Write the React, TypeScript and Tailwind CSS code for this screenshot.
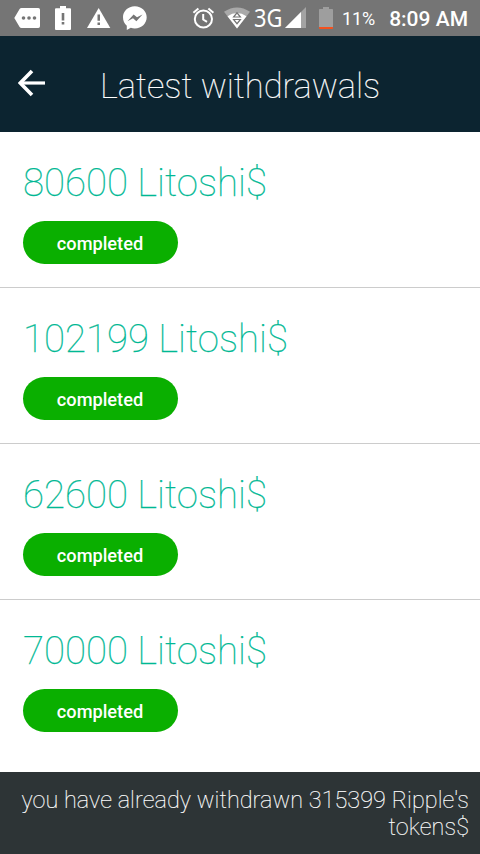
const withdrawals = [
  { amount: 80600, status: 'completed' },
  { amount: 102199, status: 'completed' },
  { amount: 62600, status: 'completed' },
  { amount: 70000, status: 'completed' },
];

function NotificationIcons() {
  return (
    <svg width="160" height="36" viewBox="0 0 160 36" fill="#fff">
      {/* More notifications */}
      <path d="M21.5 8H38.3A1.7 1.7 0 0 1 40 9.7V26.3A1.7 1.7 0 0 1 38.3 28H21.5Q20.3 28 19.6 27L14.3 18L19.6 9Q20.3 8 21.5 8Z" />
      <g fill="#757575">
        <circle cx="23.5" cy="18" r="1.8" />
        <circle cx="29" cy="18" r="1.8" />
        <circle cx="34.5" cy="18" r="1.8" />
      </g>
      {/* Battery alert */}
      <path d="M60 6H66V8.3H70Q71 8.3 71 9.3V29Q71 30 70 30H56Q55 30 55 29V9.3Q55 8.3 56 8.3H60Z" />
      <path fill="#757575" d="M61.7 13H64.3V20.5H61.7ZM61.7 22H64.3V24.6H61.7Z" />
      {/* Warning */}
      <path d="M98.7 8L110.3 28H87Z" />
      <path fill="#757575" d="M97.5 14.6H100V20.8H97.5ZM97.5 22.4H100V25H97.5Z" />
      {/* Messenger */}
      <path d="M134.8 6.2C141.7 6.2 146.7 11.2 146.7 17.3C146.7 23.5 141.7 28.4 134.8 28.4C133.4 28.4 132 28.2 130.8 27.8L126.8 30V25.8C124.3 23.8 123 20.8 123 17.3C123 11.2 127.9 6.2 134.8 6.2Z" />
      <path fill="#757575" d="M127.5 21.2L133.6 14.4L137 17.3L142.5 14.4L136.4 21.2L133 18.2Z" />
    </svg>
  );
}

function AlarmIcon() {
  return (
    <svg width="24" height="24" viewBox="0 0 24 24" fill="none" stroke="#fff" strokeWidth="2">
      <circle cx="12.4" cy="13" r="8.6" />
      <path d="M2.4 6.7L7.4 2.5M17.4 2.5L22.4 6.7M12.2 8V13.5L16 15.9" />
    </svg>
  );
}

function WifiIcon() {
  return (
    <svg width="26" height="22" viewBox="0 0 26 22">
      <path fill="#a9a9a9" d="M0 4.8Q13 -4 26 4.8L13 21.5Z" />
      <path fill="#fff" d="M3.5 9.3Q13 2.5 22.5 9.3L13 21.5Z" />
      <path fill="none" stroke="#757575" strokeWidth="1.2" d="M9.6 10L13 5.8L16.4 10ZM9.6 12.5H16.4L13 16.7Z" />
    </svg>
  );
}

function SignalIcon() {
  return (
    <svg width="21" height="22" viewBox="0 0 21 22">
      <path fill="#a3a3a3" d="M21 0V21H0Z" />
      <path fill="#fff" d="M16 5V21H0Z" />
    </svg>
  );
}

function BatteryIcon() {
  return (
    <svg width="14" height="22" viewBox="0 0 14 22">
      <path fill="#9e9e9e" d="M4 0H10V2H13.2Q14 2 14 2.8V20H0V2.8Q0 2 0.8 2H4Z" />
      <path fill="#f4511e" d="M0 20H14V21.2Q14 22 13.2 22H0.8Q0 22 0 21.2Z" />
    </svg>
  );
}

function StatusBar() {
  return (
    <div className="flex h-9 items-center bg-[#757575] text-white">
      <NotificationIcons />
      <div className="ml-[31px] flex h-full flex-1 items-center">
        <AlarmIcon />
        <div className="ml-[9px] pb-px">
          <WifiIcon />
        </div>
        <div className="ml-[4px] w-[29px] pb-0.5">
          <span className="inline-block origin-left scale-x-[0.84] font-['Noto_Sans',sans-serif] text-[26px] leading-[34px]">
            3G
          </span>
        </div>
        <div className="ml-[2px] pb-px">
          <SignalIcon />
        </div>
        <div className="ml-[13px] pb-px">
          <BatteryIcon />
        </div>
        <span className="ml-[9px] pt-0.5 text-lg leading-9 tracking-[-0.1px]">11%</span>
        <span className="mr-3 ml-auto pt-0.5 text-[21px] leading-9 font-medium">8:09 AM</span>
      </div>
    </div>
  );
}

function Header() {
  return (
    <header className="flex h-24 items-center bg-[#0c2430] text-white">
      <button className="ml-[18px] pb-[3px]" aria-label="Back">
        <svg width="28" height="28" viewBox="0 0 28 28" fill="none" stroke="#fff" strokeWidth="3.6">
          <path d="M27 14H3" strokeWidth="3.2" />
          <path d="M14 2L2.3 14L14 26" />
        </svg>
      </button>
      <h1 className="ml-[54px] pt-[5px] text-[34.5px] leading-none font-thin [-webkit-text-stroke:0.2px]">
        Latest withdrawals
      </h1>
    </header>
  );
}

export default function App() {
  return (
    <div className="flex h-[854px] w-[480px] flex-col overflow-hidden bg-white font-['Roboto',sans-serif]">
      <StatusBar />
      <Header />

      <ul className="flex-1">
        {withdrawals.map((item) => (
          <li
            key={item.amount}
            className="flex h-[156px] flex-col items-start border-b border-[#cccccc] px-[23px] pt-[28px] last:border-b-0"
          >
            <p className="text-[38.4px] leading-[45px] font-thin text-[#00b894] [-webkit-text-stroke:0.25px]">
              {item.amount} Litoshi$
            </p>
            <span className="mt-4 flex h-[43px] w-[155px] items-center justify-center rounded-full bg-[#0aaf00] pt-0.5 pr-px text-[18.2px] font-medium text-white">
              {item.status}
            </span>
          </li>
        ))}
      </ul>

      <footer className="h-[82px] bg-[#2d3436] pt-[15px] pr-[11px] pl-4 text-right text-[23.35px] leading-[27px] font-thin tracking-[0.09px] text-white [-webkit-text-stroke:0.2px]">
        you have already withdrawn 315399 Ripple's tokens$
      </footer>
    </div>
  );
}
